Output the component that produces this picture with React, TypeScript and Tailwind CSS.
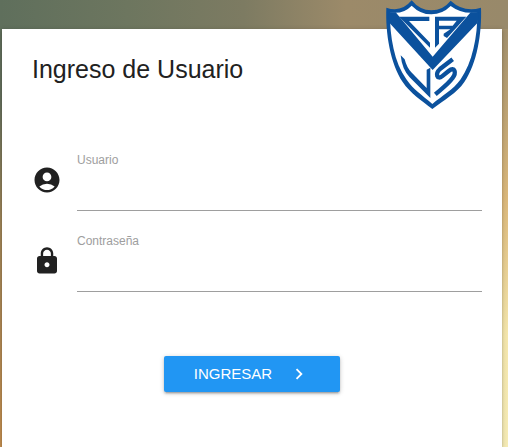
import { useState, FormEvent } from 'react';
import { MdAccountCircle, MdChevronRight, MdLock } from 'react-icons/md';

function Shield() {
  return (
    <svg viewBox="30 0 291 330" className="w-[97px] h-[110px]" role="img" aria-label="CAVS">
      <path
        d="M34 23 Q79 39 110 1 Q134 31 169 31 Q204 31 227 2 Q267 39 318 23 C321 100 306 190 268 246 C244 281 208 299 172 327 C137 300 107 281 83 246 C46 190 31 100 34 23Z"
        fill="#0b519d"
      />
      <path
        d="M45 37 Q84 44 110 17 Q136 43 169 43 Q202 43 227 18 Q262 44 307 37 C308 110 292 188 257 238 C234 270 203 286 172 312 C142 286 116 270 94 238 C58 188 44 110 45 37Z"
        fill="#fff"
      />
      <path d="M40 36 L62 37 L173 170 L287 37 L311 36 L308 68 L173 210 L43 68Z" fill="#0b519d" />
      <g fill="#0b519d">
        <path d="M72 50 H163 V63 H102 L165 128 V143Z" />
        <path d="M180 50 H274 L216 114 L206 108 V101 L226 88 H192 V131 L180 143Z M192 62 V77 H233 L245 62Z" fillRule="evenodd" />
        <path d="M77 166 L89 178 Q95 202 109 217 L155 264 V209 L166 203 V294 L104 232 Q81 208 77 166Z" />
      </g>
      <path
        d="M233 178 L195 207 C179 222 187 240 201 229 L221 213 C240 198 245 219 232 235 C220 252 202 265 181 283"
        fill="none"
        stroke="#0b519d"
        strokeWidth="13"
      />
    </svg>
  );
}

export default function App() {
  const [user, setUser] = useState('');
  const [password, setPassword] = useState('');

  const handleSubmit = (e: FormEvent) => {
    e.preventDefault();
  };

  return (
    <div className="min-h-screen flex flex-col pt-[29px] pl-0.5 pr-1.5 bg-[linear-gradient(to_right,#5f6f5c,#6d765f_25%,#7d7b62_48%,#9c8a69_68%,#98896a),linear-gradient(to_bottom,#5f6f5c,#65705c_22%,#a08558_50%,#c48f50),linear-gradient(to_bottom,#98896a,#dcb97c_45%,#f4e6ac_75%,#f5ebb5)] bg-[size:100%_29px,50%_100%,100%_100%] bg-no-repeat font-['Liberation_Sans',Arial,sans-serif] text-[#212121]">
      <main className="relative flex-1 bg-white px-5 shadow-[0_2px_2px_rgba(0,0,0,0.14),0_1px_5px_rgba(0,0,0,0.2)]">
        <div className="absolute right-5 -top-[29px]">
          <Shield />
        </div>

        <h1 className="pt-6 pl-2.5 text-[25px] leading-8">Ingreso de Usuario</h1>

        <form onSubmit={handleSubmit} className="pt-16">
          <div className="flex gap-[15px] pl-2.5 h-[81px]">
            <MdAccountCircle className="size-[30px] mt-4 shrink-0" />
            <div className="flex-1 pt-[3px]">
              <label htmlFor="user" className="block text-xs text-[#9e9e9e]">Usuario</label>
              <input
                id="user"
                type="text"
                value={user}
                onChange={(e) => setUser(e.target.value)}
                className="block w-full h-[43px] border-b border-[#9e9e9e] outline-none focus:border-[#2196f3]"
              />
            </div>
          </div>

          <div className="flex gap-[15px] pl-2.5 h-[81px]">
            <MdLock className="size-[30px] mt-4 shrink-0" />
            <div className="flex-1 pt-[3px]">
              <label htmlFor="password" className="block text-xs text-[#9e9e9e]">Contraseña</label>
              <input
                id="password"
                type="password"
                value={password}
                onChange={(e) => setPassword(e.target.value)}
                className="block w-full h-[43px] border-b border-[#9e9e9e] outline-none focus:border-[#2196f3]"
              />
            </div>
          </div>

          <div className="flex justify-center pt-[45px]">
            <button
              type="submit"
              className="flex items-center gap-4 h-9 px-[30px] rounded-xs bg-[#2196f3] text-white text-[15px] uppercase cursor-pointer shadow-[0_2px_2px_rgba(0,0,0,0.14),0_3px_1px_-2px_rgba(0,0,0,0.12),0_1px_5px_rgba(0,0,0,0.2)]"
            >
              Ingresar
              <MdChevronRight className="size-[22px]" />
            </button>
          </div>
        </form>
      </main>
    </div>
  );
}
